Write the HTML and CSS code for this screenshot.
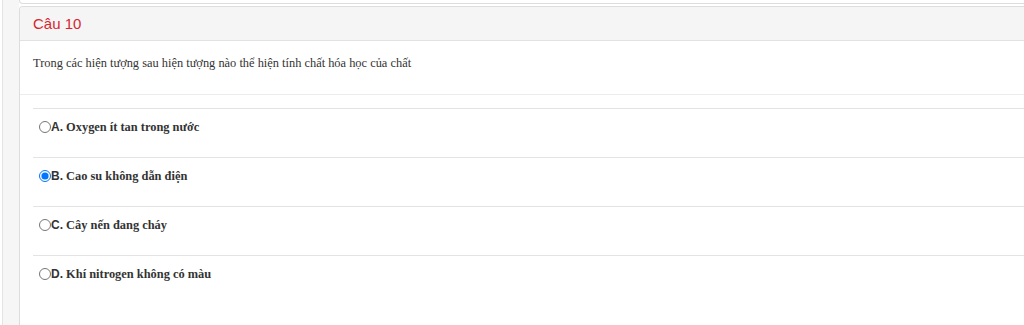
FILE: index.html
```
<!DOCTYPE html>
<html lang="vi">
<head>
  <meta charset="UTF-8">
  <meta name="viewport" content="width=device-width, initial-scale=1.0">
  <title>Câu 10</title>
  <link rel="stylesheet" href="styles.css">
</head>
<body>
  <div class="page">
    <div class="side"><span class="side-line"></span></div>

    <div class="main">
      <div class="prev-card"></div>

      <div class="card">
        <div class="card-header">Câu 10</div>
        <div class="question">Trong các hiện tượng sau hiện tượng nào thể hiện tính chất hóa học của chất</div>

        <div class="answers">
          <label class="answer">
            <input type="radio" name="q10">
            <span><span class="key">A.</span> Oxygen ít tan trong nước</span>
          </label>
          <label class="answer">
            <input type="radio" name="q10" checked>
            <span><span class="key">B.</span> Cao su không dẫn điện</span>
          </label>
          <label class="answer">
            <input type="radio" name="q10">
            <span><span class="key">C.</span> Cây nến đang cháy</span>
          </label>
          <label class="answer">
            <input type="radio" name="q10">
            <span><span class="key">D.</span> Khí nitrogen không có màu</span>
          </label>
        </div>
      </div>
    </div>
  </div>
</body>
</html>
```

FILE: styles.css
```
/* Global Styles */
body {
  margin: 0;
  background-color: #fff;
  font-family: "Liberation Serif", "Times New Roman", serif;
  color: #333;
  overflow: hidden;
}

.page {
  display: flex;
  height: 325px;
}

.side {
  width: 19px;
  flex-shrink: 0;
  background-color: #f6f6f6;
  border-left: 2px solid #fff;
  box-sizing: border-box;
}

.side-line {
  display: block;
  width: 1px;
  height: 100%;
  background-color: #e4e4e4;
}

.main {
  flex: 1;
  display: flex;
  flex-direction: column;
  margin-right: -12px;
}

.prev-card {
  height: 3px;
  border: 1px solid #ddd;
  border-top: none;
  border-radius: 0 0 4px 4px;
  margin-bottom: 2px;
}

.card {
  flex: 1;
  border: 1px solid #ddd;
  border-bottom: none;
  border-radius: 4px 0 0 0;
  background-color: #fff;
  overflow: hidden;
}

.card-header {
  height: 33px;
  line-height: 33px;
  padding-left: 13px;
  background-color: #f5f5f5;
  border-bottom: 1px solid #e2e2e2;
  font-family: "Liberation Sans", Arial, sans-serif;
  font-size: 15px;
  color: #d8262f;
}

.question {
  height: 53px;
  padding-left: 13px;
  line-height: 44px;
  font-size: 12.4px;
  border-bottom: 1px solid #ececec;
}

.answers {
  margin: 13px 0 0 13px;
}

.answer {
  display: flex;
  align-items: center;
  height: 49px;
  padding-bottom: 12px;
  box-sizing: border-box;
  border-top: 1px solid #e3e3e3;
  font-size: 12.4px;
  font-weight: bold;
}

.answer input {
  width: 12px;
  height: 12px;
  margin: 0 0 0 6px;
}

.key {
  font-family: "Liberation Sans", Arial, sans-serif;
  font-size: 12px;
}
```
